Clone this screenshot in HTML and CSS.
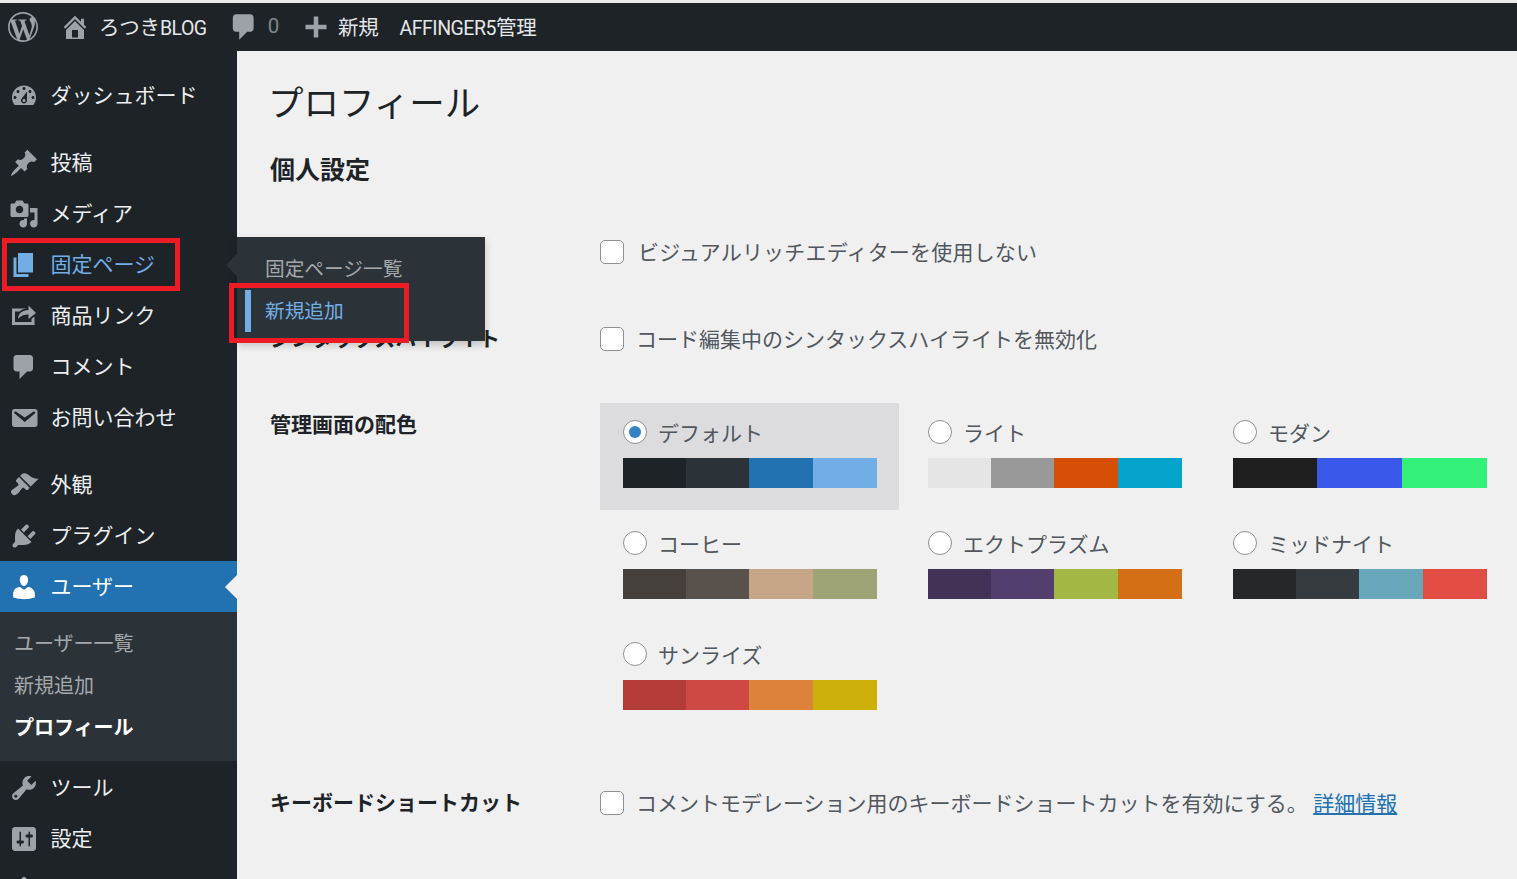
FILE: index.html
```html
<!DOCTYPE html>
<html lang="ja">
<head>
    <meta charset="UTF-8">
    <meta name="viewport" content="width=device-width, initial-scale=1.0">
    <title>プロフィール</title>
    <link rel="stylesheet" href="styles.css">
</head>
<body>
    <header class="topbar">
        <a class="top-item top-logo"><svg class="top-icon logo-icon" viewBox="0 0 20 20"><path fill-rule="evenodd" d="M10 0C4.48 0 0 4.49 0 10c0 5.52 4.48 10 10 10 5.51 0 10-4.48 10-10C20 4.49 15.51 0 10 0zM1.11 10c0-1.3.23-2.48.72-3.59L6.1 18.09C3.12 16.65 1.11 13.53 1.11 10zM10 18.89c-.79 0-1.57-.11-2.29-.33l2.42-7.1 2.58 6.98c-.86.29-1.76.45-2.71.45zm1.2-13.04c.54-.02.82-.17.82-.17.5-.05.44-.79-.06-.76 0 0-1.44.12-2.38.12-.87 0-2.33-.12-2.33-.12-.5-.03-.56.73-.06.76l.92.08 1.26 3.41-1.77 5.3-2.94-8.71c.49-.03.93-.08.93-.08.5-.06.44-.79-.06-.76 0 0-1.45.11-2.37.11-.18 0-.37 0-.58-.01C4.12 2.69 6.87 1.11 10 1.11c2.33 0 4.45.87 6.05 2.34-.68-.11-1.65.39-1.65 1.58 0 .74.45 1.36.9 2.1.35.61.55 1.36.55 2.46 0 .76-.3 1.64-.68 2.87l-.89 2.98-3.08-8.59zm3.29 11.93l2.92-7.78c.24-.64.74-1.87.43-4.25.7 1.29 1.05 2.71 1.05 4.25 0 3.29-1.73 6.24-4.4 7.78z"/></svg></a>
        <a class="top-item top-site"><svg class="top-icon home-icon" viewBox="0 0 20 20"><path d="M16 8.5l1.53 1.53-1.06 1.06L10 4.62l-6.47 6.47-1.06-1.06L10 2.5l4 4v-2h2v4zm-6-2.46l6 5.99V18H4v-5.97zM12 17v-5H8v5h4z"/></svg><span class="top-text">ろつき<span class="latin">BLOG</span></span></a>
        <a class="top-item top-comments"><svg class="top-icon comment-icon" viewBox="0 0 20 20"><path d="M5 2h9c1.1 0 2 .9 2 2v7c0 1.1-.9 2-2 2h-2l-5 5v-5H5c-1.1 0-2-.9-2-2V4c0-1.1.9-2 2-2z"/></svg><span class="top-text count">0</span></a>
        <a class="top-item top-new"><svg class="top-icon plus-icon" viewBox="0 0 20 20"><path d="M17 8.5v3h-5.5V17h-3v-5.5H3v-3h5.5V3h3v5.5H17z"/></svg><span class="top-text">新規</span></a>
        <a class="top-item top-affinger"><span class="top-text"><span class="latin">AFFINGER5</span>管理</span></a>
    </header>

    <div class="wrap">
        <nav class="sidebar">
            <ul class="menu">
                <li class="item"><svg class="icon" viewBox="0 0 20 20"><path d="M3.76 16h12.48c1.1-1.37 1.76-3.11 1.76-5 0-4.42-3.58-8-8-8s-8 3.58-8 8c0 1.89.66 3.63 1.76 5zM10 4c.55 0 1 .45 1 1s-.45 1-1 1-1-.45-1-1 .45-1 1-1zM6 6c.55 0 1 .45 1 1s-.45 1-1 1-1-.45-1-1 .45-1 1-1zm8 0c.55 0 1 .45 1 1s-.45 1-1 1-1-.45-1-1 .45-1 1-1zm-5.37 5.55L12 7v6c0 1.1-.9 2-2 2s-2-.9-2-2c0-.57.24-1.08.63-1.45zM4 10c.55 0 1 .45 1 1s-.45 1-1 1-1-.45-1-1 .45-1 1-1zm12 0c.55 0 1 .45 1 1s-.45 1-1 1-1-.45-1-1 .45-1 1-1zm-5 3c0-.55-.45-1-1-1s-1 .45-1 1 .45 1 1 1 1-.45 1-1z"/></svg>ダッシュボード</li>
                <li class="item sep"><svg class="icon" viewBox="0 0 20 20"><path d="M10.44 3.02l1.82-1.82 6.36 6.35-1.83 1.82c-1.05-.68-2.48-.57-3.41.36l-.75.75c-.92.93-1.04 2.35-.35 3.41l-1.83 1.82-2.41-2.41-2.8 2.79c-.42.42-3.38 2.71-3.8 2.29s1.86-3.39 2.28-3.81l2.79-2.79L4.1 9.36l1.83-1.82c1.05.69 2.48.57 3.4-.36l.75-.75c.93-.92 1.05-2.35.36-3.41z"/></svg>投稿</li>
                <li class="item"><svg class="icon" viewBox="0 0 20 20"><path d="M13 11V4c0-.55-.45-1-1-1h-1.67L9 1H5L3.67 3H2c-.55 0-1 .45-1 1v7c0 .55.45 1 1 1h10c.55 0 1-.45 1-1zM7 4.5c1.38 0 2.5 1.12 2.5 2.5S8.38 9.5 7 9.5 4.5 8.38 4.5 7 5.62 4.5 7 4.5zM14 6h5v10.5c0 1.38-1.12 2.5-2.5 2.5S14 17.88 14 16.5s1.12-2.5 2.5-2.5c.17 0 .34.02.5.05V9h-3V6zm-4 8.05V13h2v3.5c0 1.38-1.12 2.5-2.5 2.5S7 17.88 7 16.5 8.12 14 9.5 14c.17 0 .34.02.5.05z"/></svg>メディア</li>
                <li class="item item-hover">
                    <svg class="icon" viewBox="0 0 20 20"><path d="M6 15V2h10v13H6zm-1 1h8v2H3V5h2v11z"/></svg>固定ページ
                    <span class="mark mark-menu"></span>
                    <div class="flyout">
                        <a class="flyout-link">固定ページ一覧</a>
                        <a class="flyout-link flyout-on">新規追加</a>
                        <span class="mark mark-flyout"></span>
                    </div>
                </li>
                <li class="item"><svg class="icon" viewBox="0 0 20 20"><path d="M18 8l-5 4V9.01c-2.58.06-4.88.45-7 2.99.29-3.57 2.66-5.66 7-5.94V3zM4 14h11v-2l2-1.6V16H2V5h9.43c-1.83.32-3.31 1-4.41 2H4v7z"/></svg>商品リンク</li>
                <li class="item"><svg class="icon" viewBox="0 0 20 20"><path d="M5 2h9c1.1 0 2 .9 2 2v7c0 1.1-.9 2-2 2h-2l-5 5v-5H5c-1.1 0-2-.9-2-2V4c0-1.1.9-2 2-2z"/></svg>コメント</li>
                <li class="item"><svg class="icon" viewBox="0 0 20 20"><path d="M3.87 4h13.25C18.37 4 19 4.59 19 5.79v8.42c0 1.19-.63 1.79-1.88 1.79H3.87c-1.25 0-1.88-.6-1.88-1.79V5.79c0-1.2.63-1.79 1.88-1.79zm6.62 8.6l6.74-5.53c.24-.2.43-.66.13-1.07-.29-.41-.82-.42-1.17-.17l-5.7 3.86L4.8 5.83c-.35-.25-.88-.24-1.17.17-.3.41-.11.87.13 1.07z"/></svg>お問い合わせ</li>
                <li class="item sep"><svg class="icon" viewBox="0 0 20 20"><path d="M14.48 11.06L7.41 3.99l1.5-1.5c.5-.56 2.3-.47 3.51.32 1.21.8 1.43 1.28 2.91 2.1 1.18.64 2.45 1.26 4.45.85zm-.71.71L6.7 4.7 4.93 6.47c-.39.39-.39 1.02 0 1.41l1.06 1.06c.39.39.39 1.03 0 1.42-.6.6-1.43 1.11-2.21 1.69-.35.26-.7.53-1.01.84C1.43 13.23.76 14.82 2.03 16.09c1.27 1.27 2.86.6 4.2-.74.31-.31.58-.66.85-1.02.57-.78 1.08-1.61 1.69-2.21.39-.39 1.02-.39 1.41 0l1.06 1.06c.39.39 1.02.39 1.41 0z"/></svg>外観</li>
                <li class="item"><svg class="icon" viewBox="0 0 20 20"><path d="M13.11 4.36L9.87 7.6 8 5.73l3.24-3.24c.35-.34 1.05-.2 1.56.32.52.51.66 1.21.31 1.55zm-8 1.77l.91-1.12 9.01 9.01-1.19.84c-.71.71-2.63 1.16-3.82 1.16H6.14L4.9 17.26c-.59.59-1.54.59-2.12 0-.59-.58-.59-1.53 0-2.12l1.24-1.24v-3.88c0-1.13.4-3.19 1.09-3.89zm7.26 3.97l3.24-3.24c.34-.35 1.04-.21 1.55.31.52.51.66 1.21.31 1.55l-3.24 3.25z"/></svg>プラグイン</li>
                <li class="item item-current"><svg class="icon" viewBox="0 0 20 20"><path d="M10 9.25c-2.27 0-2.73-3.44-2.73-3.44C7 4.02 7.82 2 9.97 2c2.16 0 2.98 2.02 2.71 3.81 0 0-.41 3.44-2.68 3.44zm0 2.57L12.72 10c2.39 0 4.52 2.33 4.52 4.53v2.49s-3.65 1.13-7.24 1.13c-3.65 0-7.24-1.13-7.24-1.13v-2.49c0-2.25 1.94-4.48 4.47-4.48z"/></svg>ユーザー</li>
                <li class="submenu">
                    <a class="sub-link">ユーザー一覧</a>
                    <a class="sub-link">新規追加</a>
                    <a class="sub-link sub-on">プロフィール</a>
                </li>
                <li class="item"><svg class="icon" viewBox="0 0 20 20"><path d="M16.68 9.77c-1.34 1.34-3.3 1.67-4.95.99l-5.41 6.52c-.99.99-2.59.99-3.58 0s-.99-2.59 0-3.57l6.52-5.42c-.68-1.65-.35-3.61.99-4.95 1.28-1.28 3.12-1.62 4.72-1.06l-2.89 2.89 2.82 2.82 2.86-2.87c.53 1.58.18 3.39-1.08 4.65zM3.81 16.21c.4.39 1.04.39 1.43 0 .4-.4.4-1.04 0-1.43-.39-.4-1.03-.4-1.43 0-.39.39-.39 1.03 0 1.43z"/></svg>ツール</li>
                <li class="item"><svg class="icon" viewBox="0 0 20 20"><path d="M18 16V4c0-1.1-.9-2-2-2H4c-1.1 0-2 .9-2 2v12c0 1.1.9 2 2 2h12c1.1 0 2-.9 2-2zM8 11h1c.55 0 1 .45 1 1s-.45 1-1 1H8v1.5c0 .28-.22.5-.5.5s-.5-.22-.5-.5V13H6c-.55 0-1-.45-1-1s.45-1 1-1h1V5.5c0-.28.22-.5.5-.5s.5.22.5.5V11zm5-2h-1c-.55 0-1-.45-1-1s.45-1 1-1h1V5.5c0-.28.22-.5.5-.5s.5.22.5.5V7h1c.55 0 1 .45 1 1s-.45 1-1 1h-1v5.5c0 .28-.22.5-.5.5s-.5-.22-.5-.5V9z"/></svg>設定</li>
                <li class="item"><svg class="icon" viewBox="0 0 20 20"><path d="M10 1L1 8h18z"/></svg></li>
            </ul>
        </nav>

        <main class="content">
            <h1>プロフィール</h1>
            <h2>個人設定</h2>

            <div class="form-row row-editor">
                <div class="form-label"></div>
                <label class="check"><span class="checkbox"></span><span class="check-text check-text-wide">ビジュアルリッチエディターを使用しない</span></label>
            </div>

            <div class="form-row row-syntax">
                <div class="form-label">シンタックスハイライト</div>
                <label class="check"><span class="checkbox"></span><span class="check-text">コード編集中のシンタックスハイライトを無効化</span></label>
            </div>

            <div class="form-row row-colors">
                <div class="form-label">管理画面の配色</div>
                <div class="schemes">
                    <div class="scheme scheme-on">
                        <div class="scheme-head"><span class="radio radio-on"></span>デフォルト</div>
                        <div class="swatches"><i class="c-default-1"></i><i class="c-default-2"></i><i class="c-default-3"></i><i class="c-default-4"></i></div>
                    </div>
                    <div class="scheme">
                        <div class="scheme-head"><span class="radio"></span>ライト</div>
                        <div class="swatches"><i class="c-light-1"></i><i class="c-light-2"></i><i class="c-light-3"></i><i class="c-light-4"></i></div>
                    </div>
                    <div class="scheme">
                        <div class="scheme-head"><span class="radio"></span>モダン</div>
                        <div class="swatches swatches-three"><i class="c-modern-1"></i><i class="c-modern-2"></i><i class="c-modern-3"></i></div>
                    </div>
                    <div class="scheme">
                        <div class="scheme-head"><span class="radio"></span>コーヒー</div>
                        <div class="swatches"><i class="c-coffee-1"></i><i class="c-coffee-2"></i><i class="c-coffee-3"></i><i class="c-coffee-4"></i></div>
                    </div>
                    <div class="scheme">
                        <div class="scheme-head"><span class="radio"></span>エクトプラズム</div>
                        <div class="swatches"><i class="c-ecto-1"></i><i class="c-ecto-2"></i><i class="c-ecto-3"></i><i class="c-ecto-4"></i></div>
                    </div>
                    <div class="scheme">
                        <div class="scheme-head"><span class="radio"></span>ミッドナイト</div>
                        <div class="swatches"><i class="c-mid-1"></i><i class="c-mid-2"></i><i class="c-mid-3"></i><i class="c-mid-4"></i></div>
                    </div>
                    <div class="scheme">
                        <div class="scheme-head"><span class="radio"></span>サンライズ</div>
                        <div class="swatches"><i class="c-sun-1"></i><i class="c-sun-2"></i><i class="c-sun-3"></i><i class="c-sun-4"></i></div>
                    </div>
                </div>
            </div>

            <div class="form-row row-keys">
                <div class="form-label">キーボードショートカット</div>
                <label class="check"><span class="checkbox"></span><span class="check-text">コメントモデレーション用のキーボードショートカットを有効にする。 <a class="more" href="#">詳細情報</a></span></label>
            </div>
        </main>
    </div>
</body>
</html>
```

FILE: styles.css
```css
* {
    box-sizing: border-box;
}
html, body {
    height: 100%;
}
body {
    margin: 0;
    overflow: hidden;
    background: #f0f0f1;
    color: #3c434a;
    font-family: "Noto Sans", "Noto Sans CJK JP", sans-serif;
    font-size: 21px;
}

/* top bar */
.topbar {
    display: flex;
    align-items: center;
    height: 51px;
    border-top: 3px solid #ececec;
    background: #1d2327;
    color: #e4e6e8;
    font-family: Roboto, "Noto Sans CJK JP", sans-serif;
    font-size: 20.5px;
    letter-spacing: -0.2px;
}
.top-item {
    display: flex;
    align-items: center;
}
.top-text {
    padding-bottom: 2px;
}
.latin {
    font-size: 19.5px;
    letter-spacing: -0.5px;
}
.top-icon {
    fill: #9ca2a7;
}
.logo-icon, .home-icon, .plus-icon {
    width: 30px;
    height: 30px;
}
.comment-icon {
    width: 32px;
    height: 32px;
}
.top-logo {
    margin-left: 8px;
}
.top-site {
    margin-left: 22px;
    gap: 9px;
}
.top-comments {
    margin-left: 21px;
    gap: 8px;
}
.count {
    color: #7f868c;
}
.top-new {
    margin-left: 22px;
    gap: 7px;
}
.top-affinger {
    margin-left: 21px;
}

.wrap {
    display: flex;
    height: 828px;
}

/* side menu */
.sidebar {
    flex: none;
    width: 237px;
    background: #1d2327;
    color: #eceef0;
}
.menu {
    list-style: none;
    margin: 0;
    padding: 19px 0 0;
}
.item {
    position: relative;
    display: flex;
    align-items: center;
    gap: 11.5px;
    height: 51px;
    padding-left: 9px;
    line-height: 51px;
}
.sep {
    margin-top: 16px;
}
.icon {
    flex: none;
    width: 30px;
    height: 30px;
    fill: #9ca2a7;
}
.item-hover {
    color: #72aee6;
}
.item-hover .icon {
    fill: #72aee6;
}
.item-current {
    background: #2271b1;
    color: #fff;
}
.item-current .icon {
    fill: #fff;
}
.item-current::after {
    content: "";
    position: absolute;
    right: 0;
    top: 14px;
    border: 12px solid transparent;
    border-right-color: #f0f0f1;
    border-left-width: 0;
}
.submenu {
    display: flex;
    flex-direction: column;
    height: 149px;
    margin-bottom: 1px;
    padding-top: 11px;
    background: #2c3338;
    color: #a4a8ab;
    font-size: 20px;
}
.sub-link {
    height: 42px;
    padding-left: 14px;
    line-height: 42px;
}
.sub-on {
    color: #fff;
    font-weight: 700;
}

/* flyout over the content */
.flyout {
    position: absolute;
    left: 237px;
    top: -2px;
    z-index: 2;
    width: 248px;
    height: 104px;
    padding-top: 11px;
    background: #2c3338;
    box-shadow: 0 4px 8px rgba(0, 0, 0, 0.2);
    color: #a4a8ab;
    font-size: 19.7px;
}
.flyout::before {
    content: "";
    position: absolute;
    left: -11px;
    top: 16px;
    border: 12px solid transparent;
    border-right-color: #2c3338;
    border-left-width: 0;
}
.flyout-link {
    display: block;
    height: 42px;
    padding-left: 28px;
    line-height: 42px;
}
.flyout-on {
    border-left: 6px solid #72aee6;
    margin-left: 8px;
    padding-left: 14px;
    color: #72aee6;
}

/* red annotation boxes */
.mark {
    position: absolute;
    border: 5px solid #ed1c24;
}
.mark-menu {
    left: 2px;
    top: -1px;
    z-index: 3;
    width: 178px;
    height: 53px;
}
.mark-flyout {
    left: -8px;
    top: 46px;
    width: 180px;
    height: 60px;
}

/* profile form */
.content {
    flex: 1;
    padding: 25px 0 0 33px;
    color: #1d2327;
}
h1 {
    margin: 0 0 0 -2px;
    font-size: 35.5px;
    font-weight: 400;
    line-height: 52px;
}
h2 {
    margin: 21px 0 0;
    font-size: 25px;
    font-weight: 700;
    line-height: 40px;
}
.form-row {
    display: grid;
    grid-template-columns: 330px 1fr;
}
.form-label {
    font-weight: 700;
    line-height: 42px;
}
.row-editor {
    margin-top: 41px;
}
.row-syntax {
    margin-top: 43px;
}
.row-colors {
    margin-top: 42px;
}
.row-keys {
    margin-top: 49px;
}
.check {
    display: flex;
    align-items: center;
    height: 44px;
    color: #50575e;
}
.checkbox {
    flex: none;
    width: 24px;
    height: 24px;
    border: 1.5px solid #8c8f94;
    border-radius: 5px;
    background: #fff;
}
.check-text {
    margin-left: 12px;
    padding-bottom: 2px;
}
.check-text-wide {
    margin-left: 14px;
    letter-spacing: 0.2px;
}
.more {
    color: #2271b1;
}

/* colour schemes */
.schemes {
    display: grid;
    grid-template-columns: repeat(3, 299px);
    gap: 4px 6px;
}
.scheme {
    height: 107px;
    padding: 17px 22px 0 23px;
    color: #50575e;
}
.scheme-on {
    background: #dcdcde;
}
.scheme-head {
    display: flex;
    align-items: center;
    gap: 11px;
    height: 24px;
}
.radio {
    flex: none;
    width: 24px;
    height: 24px;
    border: 1.5px solid #8c8f94;
    border-radius: 50%;
    background: #fff;
}
.radio-on {
    display: flex;
    align-items: center;
    justify-content: center;
}
.radio-on::before {
    content: "";
    width: 12px;
    height: 12px;
    border-radius: 50%;
    background: #3582c4;
}
.swatches {
    display: grid;
    grid-template-columns: 63px 63px 64px 64px;
    height: 30px;
    margin-top: 14px;
}
.swatches-three {
    grid-template-columns: 84px 85px 85px;
}
.c-default-1 { background: #1d2327; }
.c-default-2 { background: #2c3338; }
.c-default-3 { background: #2271b1; }
.c-default-4 { background: #72aee6; }
.c-light-1 { background: #e5e5e5; }
.c-light-2 { background: #999999; }
.c-light-3 { background: #d64e07; }
.c-light-4 { background: #04a4cc; }
.c-modern-1 { background: #1e1e1e; }
.c-modern-2 { background: #3858e9; }
.c-modern-3 { background: #33f078; }
.c-coffee-1 { background: #46403c; }
.c-coffee-2 { background: #59524c; }
.c-coffee-3 { background: #c7a589; }
.c-coffee-4 { background: #9ea476; }
.c-ecto-1 { background: #413256; }
.c-ecto-2 { background: #523f6d; }
.c-ecto-3 { background: #a3b745; }
.c-ecto-4 { background: #d46f15; }
.c-mid-1 { background: #25282b; }
.c-mid-2 { background: #363b3f; }
.c-mid-3 { background: #69a8bb; }
.c-mid-4 { background: #e14d43; }
.c-sun-1 { background: #b43c38; }
.c-sun-2 { background: #cf4944; }
.c-sun-3 { background: #dd823b; }
.c-sun-4 { background: #ccaf0b; }
```
